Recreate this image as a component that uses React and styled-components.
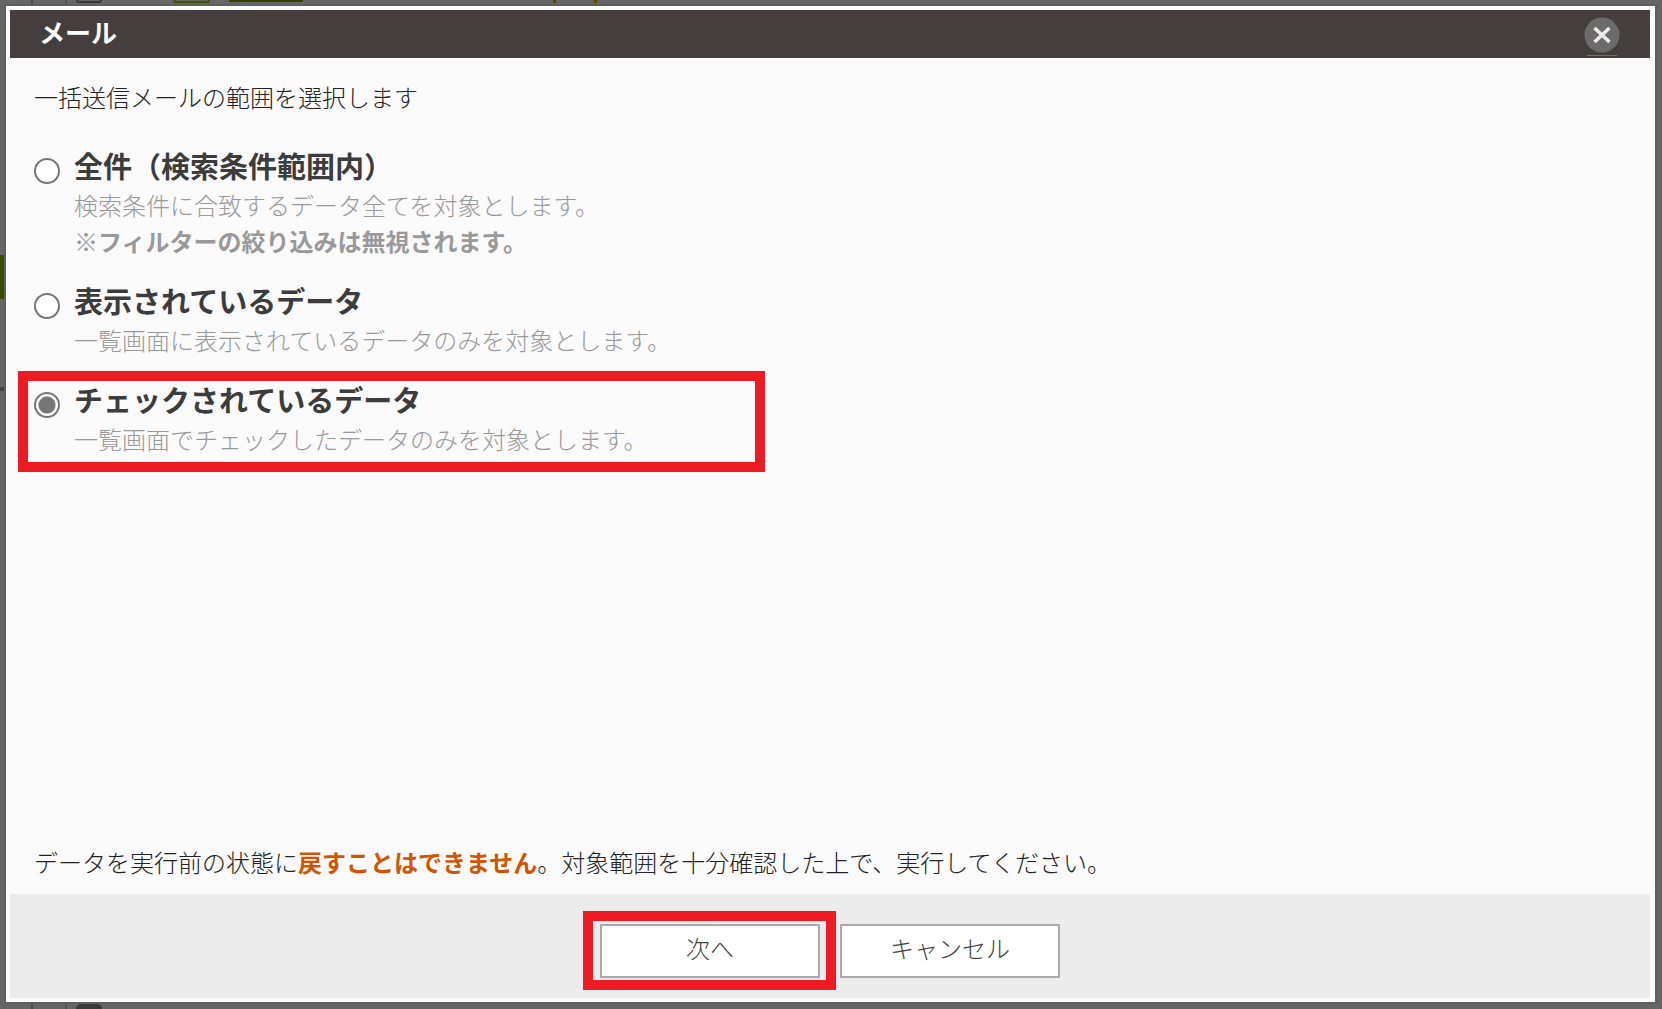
import React, { useState } from 'react'
import styled, { createGlobalStyle, css } from 'styled-components'

const GlobalStyle = createGlobalStyle`
  *,
  *::after {
    box-sizing: border-box;
  }

  body {
    margin: 0;
    background: #656565;
    color: #222;
    font-family: 'Noto Sans CJK JP', sans-serif;
    font-size: 24px;
    font-weight: 300;
    line-height: 36px;
  }
`

const Page = styled.div`
  position: relative;
  display: flex;
  height: 100vh;
  padding: 6px 7px 7px 6px;
  overflow: hidden;
`

// Dimmed page behind the dialog, only its edges can be seen
const Backdrop = styled.div`
  position: absolute;
  inset: 0;
`

const Scrap = styled.span`
  position: absolute;
  top: ${props => props.$bottom ? 'auto' : `${props.$y || 0}px`};
  bottom: ${props => props.$bottom ? '0' : 'auto'};
  left: ${props => props.$x}px;
  width: ${props => props.$w}px;
  height: ${props => props.$h}px;
  background: ${props => props.$color};
  ${({ $outline }) => $outline && css`
    background: none;
    border: 2px solid ${$outline};
    border-top: 0;
    border-radius: 0 0 4px 4px;
  `}
  ${({ $round }) => $round && `border-radius: 8px 8px 0 0;`}
`

const Dialog = styled.section`
  position: relative;
  flex: 1;
  display: flex;
  flex-direction: column;
  min-width: 0;
  padding: 4px 5px 4px 4px;
  background: #fafafa;
  box-shadow: 0 0 0 2px #5e5e5e, inset 0 4px 0 #fff;
`

const Header = styled.header`
  display: flex;
  align-items: center;
  justify-content: space-between;
  height: 48px;
  padding: 0 30px 0 29px;
  background: #443f3e;
`

const Title = styled.h1`
  margin: 0;
  padding-bottom: 4px;
  color: #fff;
  font-size: 26px;
  font-weight: 700;
  line-height: 40px;
`

const CloseButton = styled.button`
  display: flex;
  align-self: flex-end;
  padding: 0 0 2px;
  border: 0;
  background: none;
  cursor: pointer;
`

const Body = styled.main`
  flex: 1;
  display: flex;
  flex-direction: column;
  padding: 21px 24px 14px;
`

const Text = styled.p`
  margin: 0;
`

const Warning = styled(Text)`
  margin-top: auto;

  strong {
    color: #d35400;
    font-weight: 700;
  }
`

const Options = styled.div`
  display: flex;
  flex-direction: column;
  gap: 21px;
  margin-top: 30px;
`

const highlight = css`
  &::after {
    content: '';
    position: absolute;
    border: 10px solid #ed1c24;
    pointer-events: none;
  }
`

const Option = styled.label`
  position: relative;
  display: flex;
  align-items: flex-start;
  gap: 14px;
  cursor: pointer;

  ${({ $marked }) => $marked && css`
    ${highlight}
    &::after {
      top: -8px;
      bottom: -15px;
      left: -16px;
      width: 747px;
    }
  `}
`

const Radio = styled.input`
  appearance: none;
  flex: none;
  width: 26px;
  height: 26px;
  margin: 13px 0 0;
  border: 2px solid #767676;
  border-radius: 50%;
  background: #fff;

  &:checked {
    background: radial-gradient(circle, #767676 8px, #fff 9px);
  }
`

const OptionText = styled.span`
  display: flex;
  flex-direction: column;
  color: #999;
`

const OptionTitle = styled.span`
  padding-bottom: 2px;
  color: #3c3c3c;
  font-size: 29px;
  font-weight: 700;
  line-height: 40px;
`

const Note = styled.strong`
  font-weight: 700;
`

const Footer = styled.footer`
  display: flex;
  justify-content: center;
  gap: 20px;
  height: 104px;
  padding-top: 30px;
  background: #ececec;
`

const Button = styled.button`
  position: relative;
  width: 220px;
  height: 54px;
  padding: 0 0 6px;
  border: 2px solid #aaa;
  background: #fff;
  color: #444;
  font: inherit;
  cursor: pointer;

  ${({ $marked }) => $marked && css`
    ${highlight}
    &::after {
      top: -15px;
      right: -18px;
      bottom: -14px;
      left: -19px;
    }
  `}
`

const CloseIcon = () => (
  <svg width="36" height="40" viewBox="0 0 36 40">
    <circle cx="18" cy="19" r="17.5" fill="#6b6b6b" />
    <path d="M10.5 12l15 14M25.5 12l-15 14" stroke="#ececec" strokeWidth="3.6" />
    <path d="M3 39.5h30" stroke="#6f7355" strokeWidth="1" />
  </svg>
)

const ranges = [
  {
    id: 'all',
    title: '全件（検索条件範囲内）',
    text: '検索条件に合致するデータ全てを対象とします。',
    note: '※フィルターの絞り込みは無視されます。',
  },
  {
    id: 'visible',
    title: '表示されているデータ',
    text: '一覧画面に表示されているデータのみを対象とします。',
  },
  {
    id: 'checked',
    title: 'チェックされているデータ',
    text: '一覧画面でチェックしたデータのみを対象とします。',
    marked: true,
  },
]

const App = () => {
  const [range, setRange] = useState('checked')

  return (
    <Page>
      <GlobalStyle />
      <Backdrop aria-hidden="true">
        <Scrap $x={31} $w={2} $h={4} $color="#4a4a4a" />
        <Scrap $x={65} $w={2} $h={4} $color="#555" />
        <Scrap $x={76} $w={26} $h={3} $outline="#3a3a3a" />
        <Scrap $x={173} $w={37} $h={3} $outline="#3b5500" />
        <Scrap $x={229} $w={74} $h={2} $color="#2f4400" />
        <Scrap $x={553} $w={3} $h={3} $color="#5e4600" />
        <Scrap $x={594} $w={3} $h={3} $color="#5e4600" />
        <Scrap $x={0} $y={255} $w={4} $h={44} $color="#344d00" />
        <Scrap $x={0} $y={387} $w={4} $h={4} $color="#484644" />
        <Scrap $bottom $x={31} $w={2} $h={5} $color="#4a4a4a" />
        <Scrap $bottom $x={65} $w={2} $h={5} $color="#555" />
        <Scrap $bottom $round $x={76} $w={26} $h={5} $color="#3a3a3a" />
      </Backdrop>
      <Dialog role="dialog" aria-labelledby="dialog-title">
        <Header>
          <Title id="dialog-title">メール</Title>
          <CloseButton type="button" aria-label="閉じる">
            <CloseIcon />
          </CloseButton>
        </Header>
        <Body>
          <Text>一括送信メールの範囲を選択します</Text>
          <Options>
            {ranges.map(({ id, title, text, note, marked }) => (
              <Option key={id} $marked={marked}>
                <Radio
                  type="radio"
                  name="range"
                  value={id}
                  checked={range === id}
                  onChange={() => setRange(id)}
                />
                <OptionText>
                  <OptionTitle>{title}</OptionTitle>
                  <span>{text}</span>
                  {note && <Note>{note}</Note>}
                </OptionText>
              </Option>
            ))}
          </Options>
          <Warning>
            データを実行前の状態に<strong>戻すことはできません</strong>。対象範囲を十分確認した上で、実行してください。
          </Warning>
        </Body>
        <Footer>
          <Button type="button" $marked>次へ</Button>
          <Button type="button">キャンセル</Button>
        </Footer>
      </Dialog>
    </Page>
  )
}

export default App
